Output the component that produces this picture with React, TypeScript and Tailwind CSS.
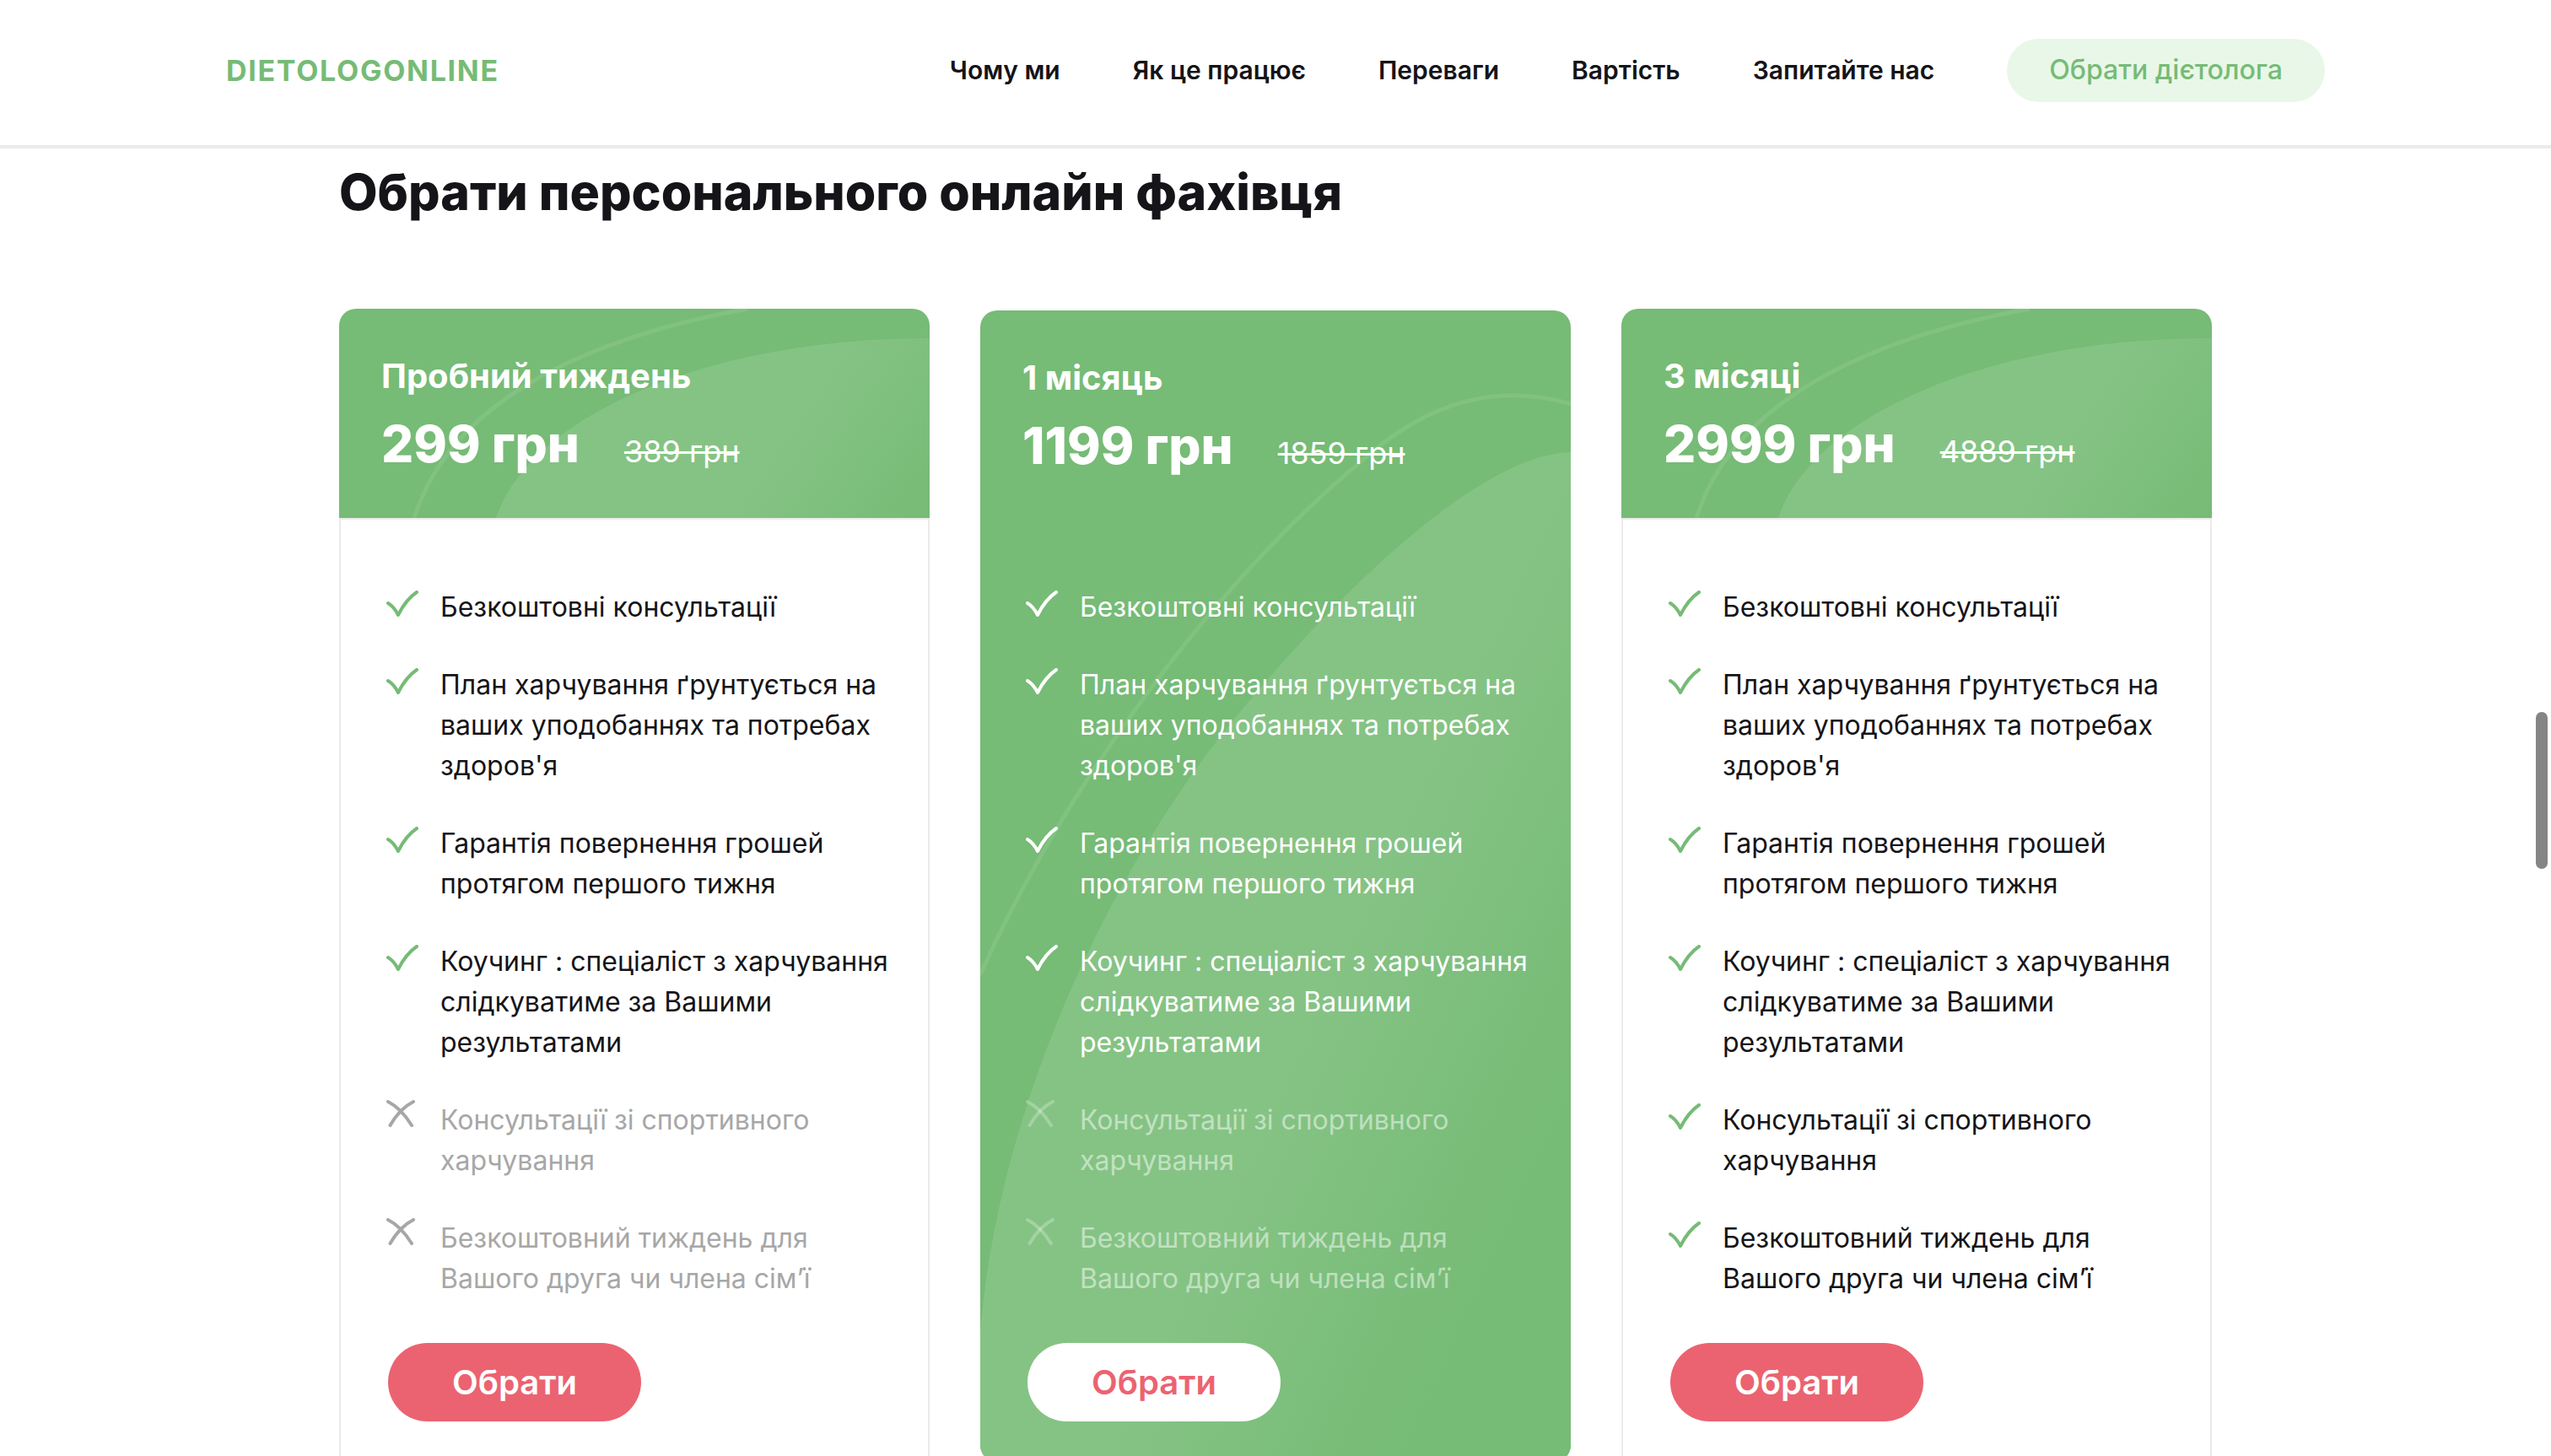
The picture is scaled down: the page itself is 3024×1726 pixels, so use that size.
type Feature = { text: string; included: boolean };

type Plan = {
  name: string;
  price: string;
  oldPrice: string;
  featured: boolean;
  features: Feature[];
};

const featureTexts = [
  "Безкоштовні консультації",
  "План харчування ґрунтується на ваших уподобаннях та потребах здоров'я",
  "Гарантія повернення грошей протягом першого тижня",
  "Коучинг : спеціаліст з харчування слідкуватиме за Вашими результатами",
  "Консультації зі спортивного харчування",
  "Безкоштовний тиждень для Вашого друга чи члена сім’ї",
];

const withIncluded = (count: number): Feature[] =>
  featureTexts.map((text, i) => ({ text, included: i < count }));

const plans: Plan[] = [
  { name: "Пробний тиждень", price: "299 грн", oldPrice: "389 грн", featured: false, features: withIncluded(4) },
  { name: "1 місяць", price: "1199 грн", oldPrice: "1859 грн", featured: true, features: withIncluded(4) },
  { name: "3 місяці", price: "2999 грн", oldPrice: "4889 грн", featured: false, features: withIncluded(6) },
];

const navItems = ["Чому ми", "Як це працює", "Переваги", "Вартість", "Запитайте нас"];

function CheckIcon() {
  return (
    <svg viewBox="0 0 38 32" className="h-8 w-[38px]" fill="none" stroke="currentColor" strokeWidth="4" strokeLinecap="round" strokeLinejoin="round" aria-hidden="true">
      <path d="M2 15C7 18 11 23 14 29C19 19 27 8 36 2" />
    </svg>
  );
}

function CrossIcon() {
  return (
    <svg viewBox="0 0 38 32" className="h-8 w-[38px]" fill="none" stroke="currentColor" strokeWidth="4" strokeLinecap="round" aria-hidden="true">
      <path d="M2 2C12 7 22 17 30 30" />
      <path d="M32 2C22 7 12 17 4.500 30" />
    </svg>
  );
}

/* Decorative arcs behind the short green header of a regular card. */
function HeaderArcs({ id }: { id: string }) {
  return (
    <svg viewBox="0 0 700 248" preserveAspectRatio="none" className="absolute inset-0 size-full" aria-hidden="true">
      <defs>
        <linearGradient id={id} gradientUnits="userSpaceOnUse" x1="520" y1="160" x2="682" y2="272">
          <stop offset="0" stopColor="#85c384" />
          <stop offset="1" stopColor="#76bb76" />
        </linearGradient>
      </defs>
      <path d="M186 248C225 130 430 35 700 35V248Z" fill={`url(#${id})`} />
      <path d="M89 248C130 118 275 38 484 0" fill="none" stroke="#82c281" strokeWidth="5" />
    </svg>
  );
}

/* Decorative arcs that fill the whole featured card. */
function CardArcs({ id }: { id: string }) {
  return (
    <svg viewBox="0 0 700 1366" preserveAspectRatio="none" className="absolute inset-0 size-full" aria-hidden="true">
      <defs>
        <linearGradient id={id} gradientUnits="userSpaceOnUse" x1="410" y1="790" x2="700" y2="925">
          <stop offset="0" stopColor="#85c384" />
          <stop offset="1" stopColor="#76bb76" />
        </linearGradient>
      </defs>
      <path d="M700 168C600 170 440 315 300 486C150 670 20 950 0 1214V1366H700Z" fill={`url(#${id})`} />
      <path d="M0 788C105 555 285 315 460 172C530 111 610 85 700 111" fill="none" stroke="#82c281" strokeWidth="5" />
    </svg>
  );
}

function PriceBlock({ plan }: { plan: Plan }) {
  return (
    <div className="relative text-white">
      <h3 className="text-[40px] leading-[48px] font-bold">{plan.name}</h3>
      <p className="mt-5 flex items-baseline gap-[53px] leading-[72px]">
        <span className="text-[60px] font-extrabold">{plan.price}</span>
        <s className="text-[36px]">{plan.oldPrice}</s>
      </p>
    </div>
  );
}

function FeatureList({ plan }: { plan: Plan }) {
  return (
    <ul className="flex flex-col gap-11">
      {plan.features.map((feature) => {
        const iconColor = feature.included
          ? plan.featured ? "text-white" : "text-[#76bb76]"
          : plan.featured ? "text-white/25" : "text-[#a7a7a7]";
        const textColor = feature.included
          ? plan.featured ? "text-white" : "text-[#151418]"
          : plan.featured ? "text-white/50" : "text-[#a7a7a7]";
        return (
          <li key={feature.text} className="flex gap-[26px]">
            <span className={`shrink-0 ${feature.included ? "pt-1" : ""} ${iconColor}`}>
              {feature.included ? <CheckIcon /> : <CrossIcon />}
            </span>
            <span className={`text-[32px] leading-[48px] ${textColor}`}>{feature.text}</span>
          </li>
        );
      })}
    </ul>
  );
}

function ChooseButton({ featured }: { featured: boolean }) {
  return (
    <button
      type="button"
      className={`mt-[52px] ml-0.5 h-[93px] w-[300px] rounded-full text-[40px] font-semibold ${
        featured ? "bg-white text-[#eb6370]" : "bg-[#eb6370] text-white"
      }`}
    >
      Обрати
    </button>
  );
}

function PlanCard({ plan, id }: { plan: Plan; id: string }) {
  if (plan.featured) {
    return (
      <article className="relative mt-0.5 self-start overflow-hidden rounded-[20px] bg-[#76bb76] pt-14 pr-10 pb-12 pl-[50px]">
        <CardArcs id={id} />
        <PriceBlock plan={plan} />
        <div className="relative mt-[123px] pl-1">
          <FeatureList plan={plan} />
          <ChooseButton featured />
        </div>
      </article>
    );
  }
  return (
    <article className="rounded-[20px]">
      <header className="relative h-[248px] overflow-hidden rounded-t-[20px] bg-[#76bb76] pt-14 pr-10 pl-[50px]">
        <HeaderArcs id={id} />
        <PriceBlock plan={plan} />
      </header>
      <div className="rounded-b-[20px] border-2 border-[#eceaea] pt-20 pr-10 pb-16 pl-[54px]">
        <FeatureList plan={plan} />
        <ChooseButton featured={false} />
      </div>
    </article>
  );
}

export default function App() {
  return (
    <div className="h-screen overflow-hidden bg-white font-['Inter',sans-serif] text-[#151418]">
      <header className="border-b-4 border-[#eceaea]">
        <div className="mx-auto flex h-[172px] w-full max-w-[2488px] items-center justify-between pb-1.5">
          <a href="#" className="text-[34px] font-bold tracking-wider text-[#76bb76]">DIETOLOGONLINE</a>
          <nav className="flex items-center gap-[86px] text-[30px] font-semibold">
            {navItems.map((item) => (
              <a key={item} href="#">{item}</a>
            ))}
            <a href="#" className="flex h-[75px] items-center rounded-full bg-[#e9f7e8] px-[50px] text-[32px] font-medium text-[#76bb76]">
              Обрати дієтолога
            </a>
          </nav>
        </div>
      </header>
      <main className="mx-auto w-full max-w-[2220px] pt-4">
        <h2 className="text-[59px] leading-[72px] font-extrabold">Обрати персонального онлайн фахівця</h2>
        <section className="mt-[102px] grid grid-cols-3 gap-[60px]">
          {plans.map((plan, i) => (
            <PlanCard key={plan.name} plan={plan} id={`arc-${i}`} />
          ))}
        </section>
      </main>
      <div className="fixed top-[844px] right-1 h-[186px] w-3.5 rounded-full bg-[#858585]" aria-hidden="true" />
    </div>
  );
}
